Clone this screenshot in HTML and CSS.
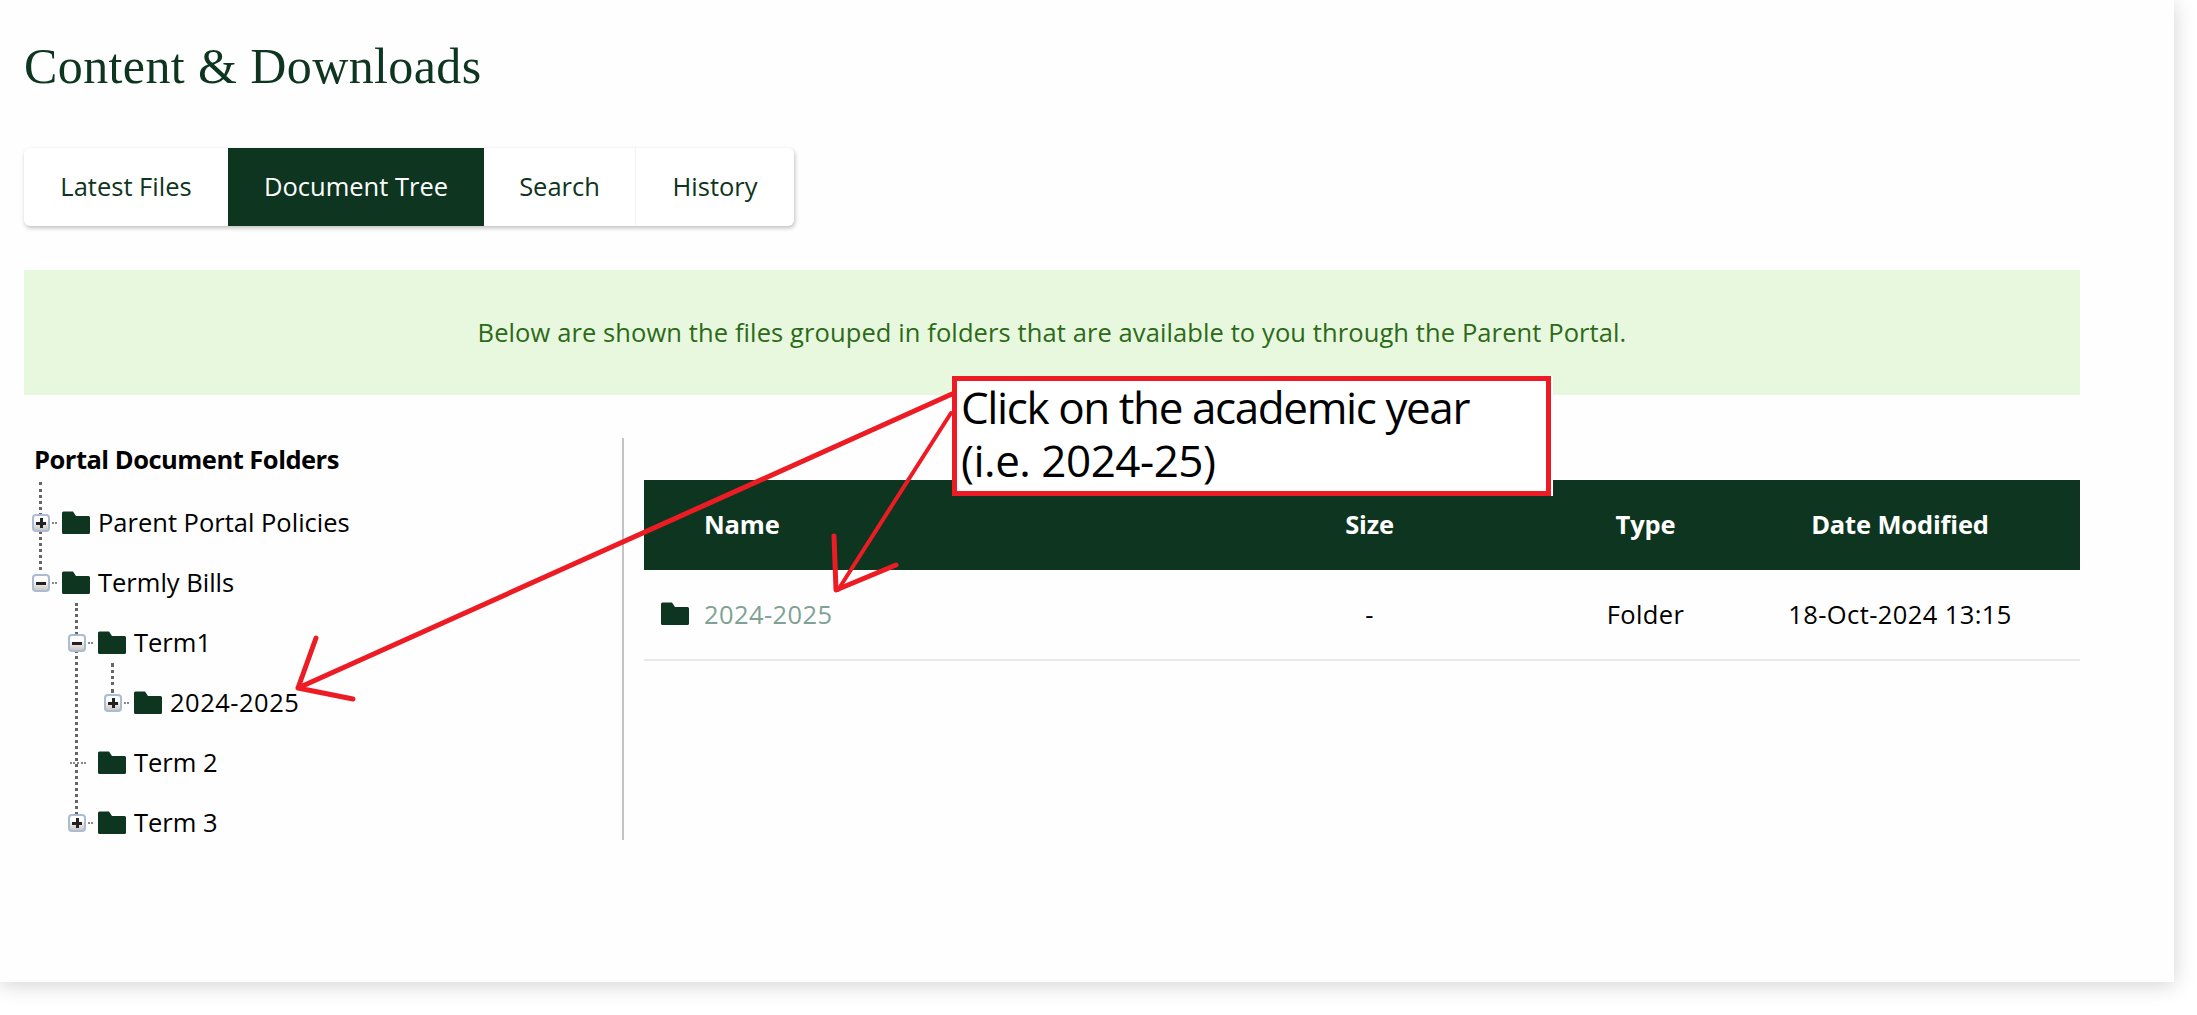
FILE: index.html
```html
<!DOCTYPE html>
<html lang="en">

<head>
  <meta charset="UTF-8">
  <title>Content &amp; Downloads</title>
  <link rel="stylesheet" href="styles.css">
</head>

<body>
  <svg class="icon-defs" width="0" height="0">
    <symbol id="folder" viewBox="0 0 28 23">
      <path d="M1.5 0.5H11L14 5H26.5Q28 5 28 6.5V21.5Q28 23 26.5 23H1.5Q0 23 0 21.5V2Q0 0.5 1.5 0.5Z" />
    </symbol>
  </svg>

  <div class="card">
    <h1 class="page-title">Content &amp; Downloads</h1>

    <div class="tabs">
      <div class="tab tab-latest">Latest Files</div>
      <div class="tab tab-tree active">Document Tree</div>
      <div class="tab tab-search">Search</div>
      <div class="tab tab-history">History</div>
    </div>

    <div class="banner">Below are shown the files grouped in folders that are available to you through the Parent Portal.</div>

    <div class="browser">
      <div class="tree-pane">
        <div class="tree-title">Portal Document Folders</div>
        <ul class="tree">
          <span class="line line-root"></span>
          <li>
            <div class="row"><span class="toggle plus"></span><svg class="folder"><use href="#folder" /></svg><span class="label">Parent Portal Policies</span></div>
          </li>
          <li>
            <div class="row"><span class="toggle minus"></span><svg class="folder"><use href="#folder" /></svg><span class="label">Termly Bills</span></div>
            <ul class="tree">
              <span class="line line-terms"></span>
              <li>
                <div class="row"><span class="toggle minus"></span><svg class="folder"><use href="#folder" /></svg><span class="label">Term1</span></div>
                <ul class="tree">
                  <span class="line line-year"></span>
                  <li>
                    <div class="row"><span class="toggle plus"></span><svg class="folder"><use href="#folder" /></svg><span class="label label-digits">2024-2025</span></div>
                  </li>
                </ul>
              </li>
              <li>
                <div class="row"><span class="toggle leaf"></span><svg class="folder"><use href="#folder" /></svg><span class="label">Term 2</span></div>
              </li>
              <li>
                <div class="row"><span class="toggle plus"></span><svg class="folder"><use href="#folder" /></svg><span class="label">Term 3</span></div>
              </li>
            </ul>
          </li>
        </ul>
      </div>

      <div class="files-pane">
        <table class="files">
          <thead>
            <tr>
              <th class="col-name">Name</th>
              <th class="col-size">Size</th>
              <th class="col-type">Type</th>
              <th class="col-date">Date Modified</th>
            </tr>
          </thead>
          <tbody>
            <tr>
              <td class="col-name"><span class="file-link"><svg class="folder"><use href="#folder" /></svg><span>2024-2025</span></span></td>
              <td class="col-size">-</td>
              <td class="col-type">Folder</td>
              <td class="col-date">18-Oct-2024 13:15</td>
            </tr>
          </tbody>
        </table>
      </div>
    </div>

    <!-- annotation drawn on top of the screenshot -->
    <div class="callout">Click on the academic year<br><span class="callout-second">(i.e. 2024-25)</span></div>
    <svg class="arrows" width="2197" height="982" viewBox="0 0 2197 982">
      <path class="arrow-wide" d="M952 394L298 688M316 638L298 688L353 699" />
      <path class="arrow-thin" d="M951 413L838 590" />
      <path class="arrow-wide" d="M834 536L836 590L896 565" />
    </svg>
  </div>
</body>

</html>
```

FILE: styles.css
```css
* {
  box-sizing: border-box;
}

body {
  height: 1015px;
  margin: 0;
  background-color: #ffffff;
  color: #000000;
  font-family: 'Open Sans', 'Noto Sans', sans-serif;
  font-size: 25.5px;
  overflow: hidden;
}

.icon-defs {
  position: absolute;
}

.card {
  position: relative;
  width: 2174px;
  height: 982px;
  padding: 0 0 0 24px;
  background-color: #fefefe;
  box-shadow: 0 3px 20px rgba(0, 0, 0, 0.18);
}

.page-title {
  height: 148px;
  margin: 0;
  padding-top: 37px;
  font-family: 'Liberation Serif', serif;
  font-size: 50px;
  font-weight: normal;
  line-height: 58px;
  letter-spacing: 0.4px;
  color: #0e3520;
}

/* tabs */
.tabs {
  display: flex;
  width: 770px;
  height: 78px;
  border-radius: 6px;
  background-color: #ffffff;
  box-shadow: 1px 2px 4px rgba(0, 0, 0, 0.25);
}

.tab {
  display: flex;
  align-items: center;
  justify-content: center;
  padding-bottom: 2px;
  color: #0e3520;
}

.tab-latest {
  width: 204px;
}

.tab-tree {
  width: 256px;
}

.tab-search {
  width: 152px;
  border-right: 1px solid #f4f4f4;
}

.tab-history {
  width: 158px;
}

.tab.active {
  background-color: #0e3520;
  color: #ffffff;
}

.banner {
  display: flex;
  align-items: center;
  justify-content: center;
  width: 2056px;
  height: 125px;
  margin-top: 44px;
  padding-bottom: 2px;
  background-color: #e8f8df;
  color: #2c6a18;
  letter-spacing: 0.1px;
}

/* folder tree */
.browser {
  display: flex;
  width: 2056px;
  margin-top: 43px;
}

.tree-pane {
  width: 600px;
  height: 402px;
  border-right: 2px solid #c4c4c4;
}

.tree-title {
  padding-left: 10px;
  margin-bottom: 13px;
  font-weight: 700;
  line-height: 42px;
  letter-spacing: -0.5px;
}

.tree {
  position: relative;
  margin: 0;
  padding: 0;
  list-style: none;
  margin-left: 36px;
}

.tree-pane > .tree {
  margin-left: 8px;
}

.row {
  display: flex;
  align-items: center;
  height: 60px;
}

.toggle {
  position: relative;
  z-index: 1;
  flex: none;
  width: 18px;
  height: 18px;
  margin-right: 12px;
  border: 2px solid #a9bcd4;
  border-radius: 4px;
  background: linear-gradient(#ffffff 30%, #cdc8c2);
}

/* dotted stub to the right of the box */
.toggle::after {
  content: "";
  position: absolute;
  left: 18px;
  top: 6px;
  width: 3px;
  border-top: 2px dotted #888888;
}

.toggle.plus::before,
.toggle.minus::before {
  content: "";
  position: absolute;
  left: 2px;
  top: 5.5px;
  width: 10px;
  height: 3px;
  background-color: #222222;
}

.toggle.plus {
  background-image:
    linear-gradient(#222222, #222222),
    linear-gradient(#ffffff 30%, #cdc8c2);
  background-size: 3px 10px, auto;
  background-position: center, center;
  background-repeat: no-repeat;
}

.toggle.leaf {
  border-color: transparent;
  background: none;
}

.toggle.leaf::after {
  left: 0;
  width: 16px;
}

.folder {
  flex: none;
  width: 28px;
  height: 23px;
  margin-top: -1px;
  fill: #0e3520;
}

.label {
  margin: -3px 0 0 8px;
  white-space: nowrap;
}

.label-digits {
  letter-spacing: 0.5px;
}

.line {
  position: absolute;
  border-left: 3px dotted #666666;
}

.line-root {
  left: 7px;
  top: -11px;
  height: 88px;
}

.line-terms {
  left: 7px;
  top: -10px;
  height: 212px;
}

.line-year {
  left: 7px;
  top: -10px;
  height: 30px;
}

/* file table */
.files-pane {
  flex: 1;
  margin-left: 20px;
  padding-top: 42px;
}

.files {
  width: 100%;
  border-collapse: collapse;
  table-layout: fixed;
}

.files th {
  height: 90px;
  padding-bottom: 3px;
  background-color: #0e3520;
  color: #ffffff;
  font-weight: 700;
  letter-spacing: -0.15px;
}

.files td {
  height: 90px;
  padding-bottom: 2px;
  border-bottom: 2px solid #e8e8e8;
  letter-spacing: 0.4px;
  text-align: center;
}

.col-name {
  width: 524px;
}

.col-size {
  width: 403px;
}

.col-type {
  width: 149px;
}

.files th.col-name {
  padding-left: 60px;
  text-align: left;
}

.files td.col-name {
  padding-left: 17px;
  text-align: left;
}

.file-link {
  display: flex;
  align-items: center;
  gap: 15px;
  color: #7fa294;
}

/* annotation */
.callout {
  position: absolute;
  left: 952px;
  top: 376px;
  width: 599px;
  height: 120px;
  padding: 0 0 0 4px;
  border: 5px solid #ed1c24;
  background-color: #ffffff;
  box-shadow: 2px 0 0 #ffffff;
  font-family: 'Open Sans', sans-serif;
  font-size: 44px;
  line-height: 53px;
  letter-spacing: -1.4px;
}

.callout-second {
  letter-spacing: -0.5px;
}

.arrows {
  position: absolute;
  left: 0;
  top: 0;
  z-index: 2;
  fill: none;
  stroke: #ed1c24;
  stroke-linecap: round;
  stroke-linejoin: round;
  pointer-events: none;
}

.arrow-wide {
  stroke-width: 5;
}

.arrow-thin {
  stroke-width: 4;
}
```
